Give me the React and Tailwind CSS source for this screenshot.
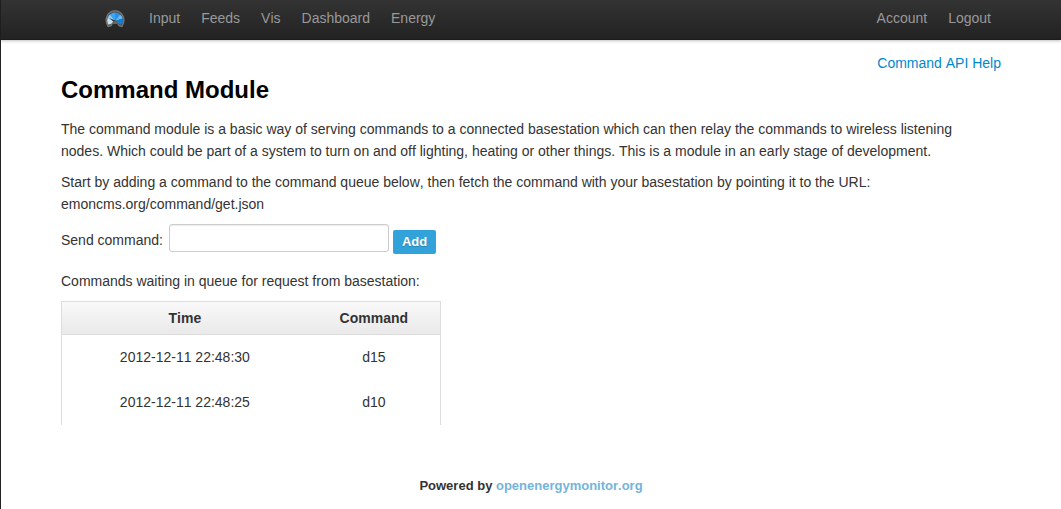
const navLinks = ['Input', 'Feeds', 'Vis', 'Dashboard', 'Energy'];
const accountLinks = ['Account', 'Logout'];

const commands = [
  { time: '2012-12-11 22:48:30', command: 'd15' },
  { time: '2012-12-11 22:48:25', command: 'd10' },
];

function GaugeLogo() {
  return (
    <svg viewBox="0 0 20 18" className="h-[18px] w-5" aria-hidden="true">
      <path d="M3 16.5C-1.500 9.500 2.500.8 10 .8s11.500 8.700 7 15.700l-3-.8-1.500-2.500h-5L6 15.700z" fill="#55514f" stroke="#7b7876" strokeWidth="1.200" />
      <path d="M10 11 5 4.500A8 8 0 0 1 10 2.500z" fill="#3aa6f8" />
      <path d="M10 11V2.500a8 8 0 0 1 5 2z" fill="#2793ee" />
      <path d="m10 11 5-6.500a8 8 0 0 1 2.700 4z" fill="#5cbcff" />
      <path d="m10 11 7.700-2.500a8.500 8.500 0 0 1-.9 6L14 14z" fill="#0c80d4" />
      <path d="M10 11 2.600 8A8 8 0 0 1 5 4.500z" fill="#8accf8" />
      <path d="M10 11 2.600 8a8.500 8.500 0 0 0 .4 6.500L6 14z" fill="#c3dff0" />
      <path d="m4.500 8.200 6.500 2.600-1.500 2z" fill="#343434" />
      <path d="m6 14.500 2-2.700 2.500-1.300 2.700 1.700 1 2.300-1.700-.5-2.500-1-2.500 1z" fill="#66625f" />
    </svg>
  );
}

function NavItem({ label }) {
  return (
    <li>
      <a href="#" className="block px-2.5 py-2 leading-5 text-[#999] hover:text-white">{label}</a>
    </li>
  );
}

export default function App() {
  return (
    <div className="min-h-screen border-l border-[#222] bg-white font-['Liberation_Sans',Arial,sans-serif] text-sm leading-[22px] text-[#333] [font-kerning:none]">
      <header className="h-10 bg-linear-to-b from-[#333] to-[#222] shadow-[0_1px_3px_rgba(0,0,0,0.25),inset_0_-1px_0_rgba(0,0,0,0.1)]">
        <nav className="mx-auto flex max-w-[940px] items-start justify-between">
          <div className="flex items-start pl-11">
            <a href="#" aria-label="Home" className="mr-3.5 block pt-2.5"><GaugeLogo /></a>
            <ul className="flex gap-px">
              {navLinks.map((label) => <NavItem key={label} label={label} />)}
            </ul>
          </div>
          <ul className="flex gap-px">
            {accountLinks.map((label) => <NavItem key={label} label={label} />)}
          </ul>
        </nav>
      </header>

      <main className="mx-auto max-w-[940px] pt-3">
        <div className="text-right">
          <a href="#" className="text-[#0088cc] hover:underline">Command API Help</a>
        </div>
        <h1 className="mb-3 text-2xl leading-8 font-bold text-black">Command Module</h1>
        <p className="mb-[9px]">
          The command module is a basic way of serving commands to a connected basestation which can then relay the commands to wireless listening<br />
          nodes. Which could be part of a system to turn on and off lighting, heating or other things. This is a module in an early stage of development.
        </p>
        <p className="mb-[9px]">
          Start by adding a command to the command queue below, then fetch the command with your basestation by pointing it to the URL:<br />
          emoncms.org/command/get.json
        </p>

        <form className="mb-4 flex items-end gap-1" onSubmit={(event) => event.preventDefault()}>
          <label htmlFor="command" className="pr-0.5 pb-0.5 leading-6">Send command:</label>
          <input
            id="command"
            type="text"
            className="mb-0.5 h-7 w-[220px] rounded-[3px] border border-[#ccc] bg-white px-1 shadow-[inset_0_1px_1px_rgba(0,0,0,0.075)] outline-none focus:border-[#52a8ec]"
          />
          <button type="submit" className="h-6 rounded-xs bg-[#32a3da] px-[9px] text-[13px] leading-6 font-bold text-white [text-shadow:0_1px_1px_rgba(0,0,0,0.2)]">Add</button>
        </form>

        <p className="mb-[9px]">Commands waiting in queue for request from basestation:</p>

        <table className="w-[380px] table-fixed border-separate border-spacing-0 border-x border-t border-[#ddd] text-center">
          <colgroup>
            <col className="w-[65%]" />
            <col className="w-[35%]" />
          </colgroup>
          <thead>
            <tr className="bg-linear-to-b from-[#f9f9f9] to-[#e9e9e9]">
              <th scope="col" className="h-[33px] border-b border-[#ddd] font-bold">Time</th>
              <th scope="col" className="h-[33px] border-b border-[#ddd] font-bold">Command</th>
            </tr>
          </thead>
          <tbody>
            {commands.map((row) => (
              <tr key={row.time}>
                <td className="h-[45px] pb-0.5">{row.time}</td>
                <td className="h-[45px] pb-0.5">{row.command}</td>
              </tr>
            ))}
          </tbody>
        </table>
      </main>

      <footer className="pt-[50px] pb-3 text-center text-[13px] font-bold">
        Powered by <a href="#" className="text-[#74b4dc] hover:underline">openenergymonitor.org</a>
      </footer>
    </div>
  );
}
